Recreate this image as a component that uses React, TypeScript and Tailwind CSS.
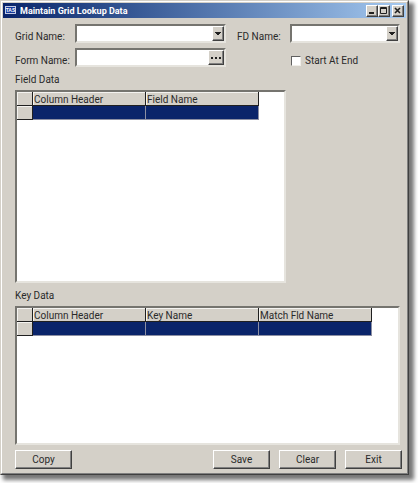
import type { ReactNode } from 'react';
import { clsx } from 'clsx';

const raised =
  'bg-[#d4d0c8] border border-t-white border-l-white border-r-[#404040] border-b-[#404040] shadow-[inset_-1px_-1px_0_#808080]';

const sunken =
  'bg-white border-2 border-t-[#75746f] border-l-[#75746f] border-r-[#e6e4de] border-b-[#e6e4de]';

interface ComboProps {
  id: string;
  className?: string;
}

function Combo({ id, className }: ComboProps) {
  return (
    <div className={clsx('relative h-[19px]', sunken, className)}>
      <select id={id} className="block h-full w-full appearance-none bg-white outline-none" />
      <span
        className={clsx(
          'pointer-events-none absolute inset-y-0 right-0 flex w-3 items-center justify-center',
          raised
        )}
      >
        <svg width="6" height="3" viewBox="0 0 6 3" shapeRendering="crispEdges">
          <path d="M0 0h6v1H5v1H4v1H2V2H1V1H0z" fill="#202020" />
        </svg>
      </span>
    </div>
  );
}

interface TitleButtonProps {
  label: string;
  children: ReactNode;
}

function TitleButton({ label, children }: TitleButtonProps) {
  return (
    <button
      type="button"
      aria-label={label}
      className={clsx('flex h-3 w-3 items-center justify-center', raised)}
    >
      <svg width="8" height="8" viewBox="0 0 8 8" stroke="#202020" fill="none">
        {children}
      </svg>
    </button>
  );
}

interface DataGridProps {
  label: string;
  columns: string[];
  className?: string;
}

function DataGrid({ label, columns, className }: DataGridProps) {
  const headCell =
    'h-[14px] border-r border-b border-[#202020] bg-[#d4d0c8] p-0 shadow-[inset_1px_1px_0_#f4f3f0]';

  return (
    <div className={clsx('overflow-hidden', sunken, className)}>
      <table aria-label={label} className="table-fixed border-separate border-spacing-0">
        <colgroup>
          <col className="w-4" />
          {columns.map((column) => (
            <col key={column} className="w-[113px]" />
          ))}
        </colgroup>
        <thead>
          <tr>
            <td className={headCell} />
            {columns.map((column) => (
              <th
                key={column}
                scope="col"
                className={clsx(headCell, 'pt-[3px] pl-px text-left leading-[10px] font-normal')}
              >
                {column}
              </th>
            ))}
          </tr>
        </thead>
        <tbody>
          <tr>
            <td className={headCell} />
            {columns.map((column) => (
              <td
                key={column}
                className="h-[14px] border-r border-b border-[#8c8fa3] bg-[#0a246a] p-0"
              />
            ))}
          </tr>
        </tbody>
      </table>
    </div>
  );
}

function ActionButton({ children }: { children: ReactNode }) {
  return (
    <button type="button" className={clsx('h-[19px] w-[57px] leading-[17px]', raised)}>
      {children}
    </button>
  );
}

export default function App() {
  return (
    <div className="bg-white pr-[9px] pb-2 font-['Roboto','Liberation_Sans',sans-serif] text-[10px] leading-3 text-[#2a2a2a]">
      <div className="border border-t-[#d4d0c8] border-r-[#404040] border-b-[#404040] border-l-[#d4d0c8] bg-[#d4d0c8] shadow-[4px_4px_4px_1px_#777]">
        <div className="border border-t-white border-r-[#808080] border-b-[#808080] border-l-white p-px pb-1">
          <header className="flex h-[15px] items-center bg-linear-to-r from-[#0a246a] to-[#a6caf0] px-0.5">
            <svg width="11" height="9" viewBox="0 0 11 9" aria-hidden="true">
              <rect x="0.5" y="0.5" width="10" height="7" fill="#16389b" stroke="#c3cbe6" />
              <text
                x="5.5"
                y="6"
                textAnchor="middle"
                fill="#fff"
                fontSize="5"
                fontWeight="700"
                fontFamily="Liberation Sans, sans-serif"
              >
                TAS
              </text>
            </svg>
            <h1 className="flex-1 pt-px pl-1 text-[9px] leading-3 font-bold text-white">
              Maintain Grid Lookup Data
            </h1>
            <div className="flex">
              <TitleButton label="Minimize">
                <path d="M1 6h5" strokeWidth="2" />
              </TitleButton>
              <TitleButton label="Maximize">
                <path d="M0.5 0.5h6v6h-6zM0 1.5h7" />
              </TitleButton>
            </div>
            <div className="ml-0.5 flex">
              <TitleButton label="Close">
                <path d="M1 1l5 5M6 1l-5 5" strokeWidth="1.6" />
              </TitleButton>
            </div>
          </header>

          <main className="pt-1.5 pr-1 pl-3">
            <div className="mr-0.5 flex items-center">
              <label htmlFor="grid-name" className="w-[60px] pt-1.5">
                Grid Name:
              </label>
              <Combo id="grid-name" className="w-[151px]" />
              <label htmlFor="fd-name" className="ml-[11px] w-[53px] pt-1.5">
                FD Name:
              </label>
              <Combo id="fd-name" className="flex-1" />
            </div>

            <div className="mt-[5px] flex items-center">
              <label htmlFor="form-name" className="w-[60px] pt-1.5">
                Form Name:
              </label>
              <div className={clsx('flex h-[19px] w-[151px]', sunken)}>
                <input id="form-name" type="text" className="min-w-0 flex-1 outline-none" />
                <button
                  type="button"
                  aria-label="Browse forms"
                  className={clsx('flex w-4 items-center justify-center', raised)}
                >
                  <svg width="10" height="2" viewBox="0 0 10 2" fill="#202020">
                    <path d="M0 0h2v2H0zM4 0h2v2H4zM8 0h2v2H8z" />
                  </svg>
                </button>
              </div>
              <label className="ml-[65px] flex items-center gap-1 pt-1.5">
                <input
                  type="checkbox"
                  className="h-2.5 w-2.5 appearance-none border border-t-[#606060] border-r-[#f0eee9] border-b-[#f0eee9] border-l-[#606060] bg-white"
                />
                Start At End
              </label>
            </div>

            <h2 className="mt-[7px] mb-1">Field Data</h2>
            <DataGrid
              label="Field Data"
              columns={['Column Header', 'Field Name']}
              className="h-[193px] w-[271px]"
            />

            <h2 className="mt-[7px] mb-1">Key Data</h2>
            <DataGrid
              label="Key Data"
              columns={['Column Header', 'Key Name', 'Match Fld Name']}
              className="mr-0.5 h-[139px]"
            />

            <div className="mt-[5px] flex gap-[9px]">
              <div className="flex-1">
                <ActionButton>Copy</ActionButton>
              </div>
              <ActionButton>Save</ActionButton>
              <ActionButton>Clear</ActionButton>
              <ActionButton>Exit</ActionButton>
            </div>
          </main>
        </div>
      </div>
    </div>
  );
}
